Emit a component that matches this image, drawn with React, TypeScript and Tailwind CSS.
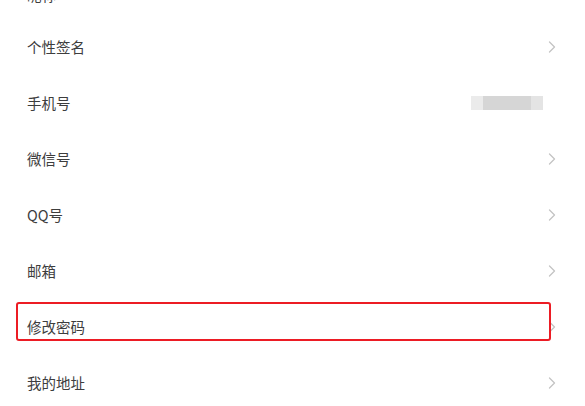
const rows: { label: string; value?: "blur"; arrow: boolean; highlight?: boolean }[] = [
  { label: "昵称", arrow: false },
  { label: "个性签名", arrow: true },
  { label: "手机号", value: "blur", arrow: false },
  { label: "微信号", arrow: true },
  { label: "QQ号", arrow: true },
  { label: "邮箱", arrow: true },
  { label: "修改密码", arrow: true, highlight: true },
  { label: "我的地址", arrow: true },
];

function Chevron() {
  return (
    <svg width="8" height="12" viewBox="0 0 8 12" fill="none" className="shrink-0">
      <path d="M1.5 1L6.5 6L1.5 11" stroke="#c4c4c4" strokeWidth="1.3" strokeLinecap="round" strokeLinejoin="round" />
    </svg>
  );
}

export default function App() {
  return (
    <div
      className="w-[585px] h-[406px] overflow-hidden bg-white"
      style={{ fontFamily: '"Noto Sans CJK SC", "Noto Sans", sans-serif' }}
    >
      <div className="-mt-[30px] flex flex-col">
        {rows.map((r, i) => (
          <div
            key={r.label}
            className={`relative flex items-center pl-[27px] pr-[29px] ${i === 0 ? "h-[49px]" : "h-[56px]"}`}
          >
            <span className="flex-1 text-[14.5px] text-[#3d3d3d]">{r.label}</span>
            {r.value === "blur" && (
              <div className="flex h-[14px] mr-[13px]">
                <div className="w-[12px] bg-[#ebebeb]" />
                <div className="w-[48px] bg-[#d6d6d6]" />
                <div className="w-[12px] bg-[#e4e4e4]" />
              </div>
            )}
            {r.arrow && <Chevron />}
            {r.highlight && (
              <div className="absolute left-[16px] top-[3px] w-[535px] h-[39px] border-2 border-[#ec1c24] rounded-[3px]" />
            )}
          </div>
        ))}
      </div>
    </div>
  );
}
